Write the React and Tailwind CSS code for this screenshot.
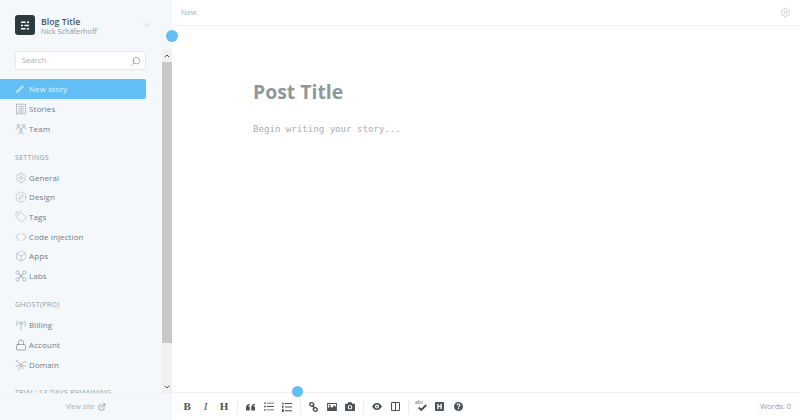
import React from "react";
import { Settings, Compass, Tag, Box, Lock, Search, ChevronDown, ChevronUp, ExternalLink } from "lucide-react";

const sans = "font-['Open_Sans',sans-serif]";

const Svg = ({ children, className, size = 13, fill = "none", stroke = "currentColor", sw = 0.9 }) => (
  <svg width={size} height={size} viewBox="0 0 16 16" fill={fill} stroke={stroke} strokeWidth={sw} className={className}>
    {children}
  </svg>
);

const Stories = (p) => (
  <Svg {...p}>
    <rect x="2" y="1.5" width="12" height="13" />
    <path d="M4.5 4.5h7M4.5 7h7M4.5 9.5h7M4.5 12h7" />
  </Svg>
);
const Team = (p) => (
  <Svg {...p}>
    <circle cx="4.5" cy="3.5" r="1.8" />
    <circle cx="11.5" cy="3.5" r="1.8" />
    <path d="M1.5 8.5c0-3 6-3 6 0M8.5 8.5c0-3 6-3 6 0" />
    <circle cx="8" cy="10" r="1.6" />
    <path d="M5 15c0-3 6-3 6 0" />
  </Svg>
);
const Code = (p) => (
  <Svg {...p}>
    <path d="M6 3L1 8l5 5M10 3l5 5-5 5" />
  </Svg>
);
const Labs = (p) => (
  <Svg {...p}>
    <circle cx="3.5" cy="3.5" r="2.2" />
    <circle cx="12.5" cy="3.5" r="2.2" />
    <circle cx="3.5" cy="12.5" r="2.2" />
    <circle cx="12.5" cy="12.5" r="2.2" />
    <path d="M5 5l6 6M11 5l-6 6" strokeWidth="1.4" />
  </Svg>
);
const Billing = (p) => (
  <Svg {...p}>
    <path d="M8 5v10M6 3.5c-.8 1-.8 3 0 4M10 3.5c.8 1 .8 3 0 4M3.5 2c-1.6 2-1.6 6 0 8M12.5 2c1.6 2 1.6 6 0 8" />
    <circle cx="8" cy="5" r="1" />
  </Svg>
);
const Domain = (p) => (
  <Svg {...p}>
    <circle cx="8" cy="8" r="1.6" />
    <path d="M7 7L2 2M9 7l2-3M6.7 8.5L1 10M9.5 8.5l5 1M7.5 9.5L5 15M9 9.5l2 4M11 4h4M1 4l3-3" />
  </Svg>
);
const Pen = (p) => (
  <Svg {...p} fill="currentColor" stroke="none">
    <path d="M11.5 1.5l3 3-9 9-4.5 1.5 1.5-4.5z" />
  </Svg>
);

function Item({ icon: I, label, className = "text-[#98a4ab]" }) {
  return (
    <div className="flex items-center h-[19.7px] pl-[15px] text-[8px] tracking-[0.1px] text-[#6f7c85]">
      <span className="w-[14px] shrink-0 flex"><I size={12} sw={0.9} strokeWidth={1} className={className} /></span>
      <span>{label}</span>
    </div>
  );
}

function Heading({ children, className }) {
  return <div className={`pl-[15px] text-[7px] leading-[10px] tracking-[0.3px] text-[#8f9ba3] ${className}`}>{children}</div>;
}

function Sep() {
  return <div className="w-px h-[14px] bg-[#e8edf0] mx-[3.5px]" />;
}

function Tool({ children }) {
  return <div className="w-[18.4px] flex items-center justify-center text-[#47525a]">{children}</div>;
}

const T = ({ children, w = 12, h = 12, vb = "0 0 12 12" }) => (
  <svg width={w} height={h} viewBox={vb} fill="currentColor">{children}</svg>
);

export default function App() {
  return (
    <div className={`relative flex h-[420px] w-[800px] overflow-hidden bg-white ${sans}`}>
      <aside className="flex flex-col w-[172px] shrink-0 bg-[#f4f8fb]">
        <header className="flex items-center h-[50px] shrink-0 pl-[15px]">
          <div className="flex items-center justify-center w-[20px] h-[20px] rounded-[3px] bg-[#2e3a41]">
            <svg width="10" height="9" viewBox="0 0 10 9" fill="none" stroke="white" strokeWidth="1.4">
              <path d="M1 1.2h4.5M7 1.2h2M1 4.5h2M4.5 4.5h4.5M1 7.8h4.5M7 7.8h2" />
            </svg>
          </div>
          <div className="ml-[6px] mt-[2px] w-[58px] shrink-0 whitespace-nowrap">
            <div className="text-[8.8px] leading-[10px] font-semibold text-[#4a565d]">Blog Title</div>
            <div className="text-[7.3px] leading-[9px] text-[#8c979e]">Nick Schäferhoff</div>
          </div>
          <ChevronDown size={12} strokeWidth={1} className="ml-[42px] text-[#9aa5ab]" />
        </header>
        <div className="flex flex-1 min-h-0">
          <div className="flex-1 min-w-0 overflow-hidden">
            <div className="mx-[15px] mt-[1px] flex items-center justify-between h-[19px] w-[131px] bg-white border border-[#e4ebef] rounded-[2px] pl-[6px] pr-[4px] text-[7.6px] text-[#a6b0b6]">
              <span>Search</span>
              <Search size={10} strokeWidth={1.2} className="text-[#5d686e] -scale-x-100" />
            </div>
            <div className="mt-[9px] mb-[0.5px] flex items-center h-[20px] w-[146px] rounded-r-[2px] bg-[#63bef5] text-[#e4f4fd]">
              <div className="flex items-center pl-[15px] text-[8px] tracking-[0.1px]">
                <span className="w-[14px] flex"><Pen size={10} className="text-[#b5e0fa]" /></span>
                <span>New story</span>
              </div>
            </div>
            <Item icon={Stories} label="Stories" />
            <Item icon={Team} label="Team" />
            <Heading className="mt-[14.5px] mb-[4.4px]">SETTINGS</Heading>
            <Item icon={Settings} label="General" />
            <Item icon={Compass} label="Design" />
            <Item icon={Tag} label="Tags" />
            <Item icon={Code} label="Code injection" />
            <Item icon={Box} label="Apps" />
            <Item icon={Labs} label="Labs" />
            <Heading className="mt-[14px] mb-[5.6px]">GHOST(PRO)</Heading>
            <Item icon={Billing} label="Billing" />
            <Item icon={Lock} label="Account" className="text-[#55616a]" />
            <Item icon={Domain} label="Domain" />
            <Heading className="mt-[13px]">TRIAL: 13 DAYS REMAINING</Heading>
          </div>
          <div className="flex flex-col w-[10px] shrink-0 bg-[#f1f1f1]">
            <div className="h-[12px] flex items-center justify-center">
              <ChevronUp size={8} strokeWidth={3} className="text-[#505050]" />
            </div>
            <div className="h-[281px] bg-[#c8c8c8]" />
            <div className="flex-1" />
            <div className="h-[12px] flex items-center justify-center">
              <ChevronDown size={8} strokeWidth={3} className="text-[#505050]" />
            </div>
          </div>
        </div>
        <footer className="flex items-center justify-center h-[27px] shrink-0 border-t border-[#eef2f5] text-[7px] text-[#a9b3b9]">
          <span>View site</span>
          <ExternalLink size={8} strokeWidth={1.5} className="ml-[4px] text-[#5d686e]" />
        </footer>
      </aside>

      <main className="flex flex-col flex-1 min-w-0">
        <div className="flex items-center justify-between h-[26px] shrink-0 border-b border-[#f0f3f5] pl-[9px] pr-[9px] text-[7.5px] text-[#a7b1b7]">
          <span>New</span>
          <Settings size={11} strokeWidth={1} className="text-[#98a4ab]" />
        </div>
        <div className="flex-1 pl-[81px]">
          <h1 className="mt-[50px] text-[19.4px] leading-[32px] font-bold text-[#90979b] font-['Open_Sans',sans-serif]">Post Title</h1>
          <p className="mt-[14px] text-[9.1px] leading-[14px] text-[#a5adb1] font-['DejaVu_Sans_Mono',monospace]">Begin writing your story...</p>
        </div>
        <div className="flex items-center justify-between h-[28px] shrink-0 border-t border-[#f0f3f5] pl-[6px] pr-[9px]">
          <div className="flex items-center">
            <Tool><span className="font-['Liberation_Serif',serif] font-bold text-[11px] leading-none">B</span></Tool>
            <Tool><span className="font-['Liberation_Serif',serif] italic text-[11px] leading-none">I</span></Tool>
            <Tool><span className="font-['Liberation_Serif',serif] font-bold text-[11px] leading-none">H</span></Tool>
            <Sep />
            <Tool>
              <T vb="0 0 12 10" w={9} h={8}>
                <path d="M0 5.5C0 2.5 2 1 5 .5v1.7C3.5 2.6 3 3.5 3 4.3h2V9.5H0zM7 5.5C7 2.5 9 1 12 .5v1.7c-1.5.4-2 1.3-2 2.1h2V9.5H7z" />
              </T>
            </Tool>
            <Tool>
              <T w={10} h={9} vb="0 0 11 10">
                <path d="M0 .5h2v1.5H0zM0 4.2h2v1.5H0zM0 8h2v1.5H0zM3.2.7H11v1.1H3.2zM3.2 4.4H11v1.1H3.2zM3.2 8.2H11v1.1H3.2z" />
              </T>
            </Tool>
            <Tool>
              <T w={10} h={10} vb="0 0 11 11">
                <path d="M.5 .5h1.2v3H.5zM0 4.5h2v.8H1v1h1v.7H0zM0 8h2v3H0zM3.2 1H11v1.1H3.2zM3.2 5H11v1.1H3.2zM3.2 9H11v1.1H3.2z" />
              </T>
            </Tool>
            <Sep />
            <Tool>
              <svg width="9" height="10" viewBox="0 0 10 11" fill="none" stroke="currentColor" strokeWidth="1.5">
                <rect x="0.8" y="0.8" width="4.4" height="3.6" rx="1.6" transform="rotate(35 3 2.6)" />
                <rect x="4.8" y="6.4" width="4.4" height="3.6" rx="1.6" transform="rotate(35 7 8.2)" />
                <path d="M3.6 3.6l2.8 3.4" />
              </svg>
            </Tool>
            <Tool>
              <T w={10} h={8} vb="0 0 11 9">
                <path fillRule="evenodd" d="M0 0h11v9H0zM1 1v5l2.5-2.5 2 2 2.5-3L10 4.5V1zM2.8 1.6a1 1 0 1 1 0 2 1 1 0 0 1 0-2z" />
              </T>
            </Tool>
            <Tool>
              <T w={10} h={9} vb="0 0 11 10">
                <path fillRule="evenodd" d="M0 2h2.8l.8-1.7h3.8L8.2 2H11v8H0zM5.5 3.2a2.5 2.5 0 1 0 0 5 2.5 2.5 0 0 0 0-5zM5.5 4.3a1.4 1.4 0 1 1 0 2.8 1.4 1.4 0 0 1 0-2.8z" />
              </T>
            </Tool>
            <Sep />
            <Tool>
              <T w={10} h={7} vb="0 0 11 8">
                <path fillRule="evenodd" d="M5.5 0C8.5 0 10.3 2.4 11 4c-.7 1.6-2.5 4-5.5 4S.7 5.6 0 4c.7-1.6 2.5-4 5.5-4zM5.5 1.6a2.4 2.4 0 1 0 0 4.8 2.4 2.4 0 0 0 0-4.8zM5.5 3a1 1 0 1 1 0 2 1 1 0 0 1 0-2z" />
              </T>
            </Tool>
            <Tool>
              <svg width="9" height="9" viewBox="0 0 10 10" fill="none" stroke="currentColor" strokeWidth="1.2">
                <rect x="0.6" y="0.6" width="8.8" height="8.8" rx="0.8" />
                <path d="M5 .6v8.8" />
              </svg>
            </Tool>
            <Sep />
            <Tool>
              <div className="relative w-[13px] h-[11px]">
                <span className="absolute left-0 -top-[2px] text-[5px] leading-[6px] text-[#5a656c]">abc</span>
                <svg className="absolute left-[3px] top-[3px]" width="9" height="7" viewBox="0 0 9 7" fill="none" stroke="currentColor" strokeWidth="2">
                  <path d="M.7 3.5l2.6 2.4L8.3 1" />
                </svg>
              </div>
            </Tool>
            <Tool>
              <T w={9} h={9} vb="0 0 10 10">
                <path fillRule="evenodd" d="M1 0h8a1 1 0 0 1 1 1v8a1 1 0 0 1-1 1H1a1 1 0 0 1-1-1V1a1 1 0 0 1 1-1zM2.5 2v6H4V5.6h2V8h1.5V2H6v2.3H4V2z" />
              </T>
            </Tool>
            <Tool>
              <T w={9} h={9} vb="0 0 10 10">
                <path fillRule="evenodd" d="M5 0a5 5 0 1 1 0 10A5 5 0 0 1 5 0zM4.3 7v1.3h1.4V7zM5 1.8C3.8 1.8 3 2.5 2.9 3.7h1.3c0-.5.3-.8.8-.8s.8.3.8.7c0 .8-1.5.9-1.5 2.6h1.4c0-1.2 1.5-1.3 1.5-2.8 0-.9-.8-1.6-2.2-1.6z" />
              </T>
            </Tool>
          </div>
          <span className="text-[7.5px] text-[#8f9ba3]">Words: 0</span>
        </div>
      </main>

      <div className="absolute left-[166px] top-[30px] w-[12px] h-[12px] rounded-full bg-[#63bef5]" />
      <div className="absolute left-[292px] top-[386px] w-[11px] h-[11px] rounded-full bg-[#63bef5]" />
    </div>
  );
}
